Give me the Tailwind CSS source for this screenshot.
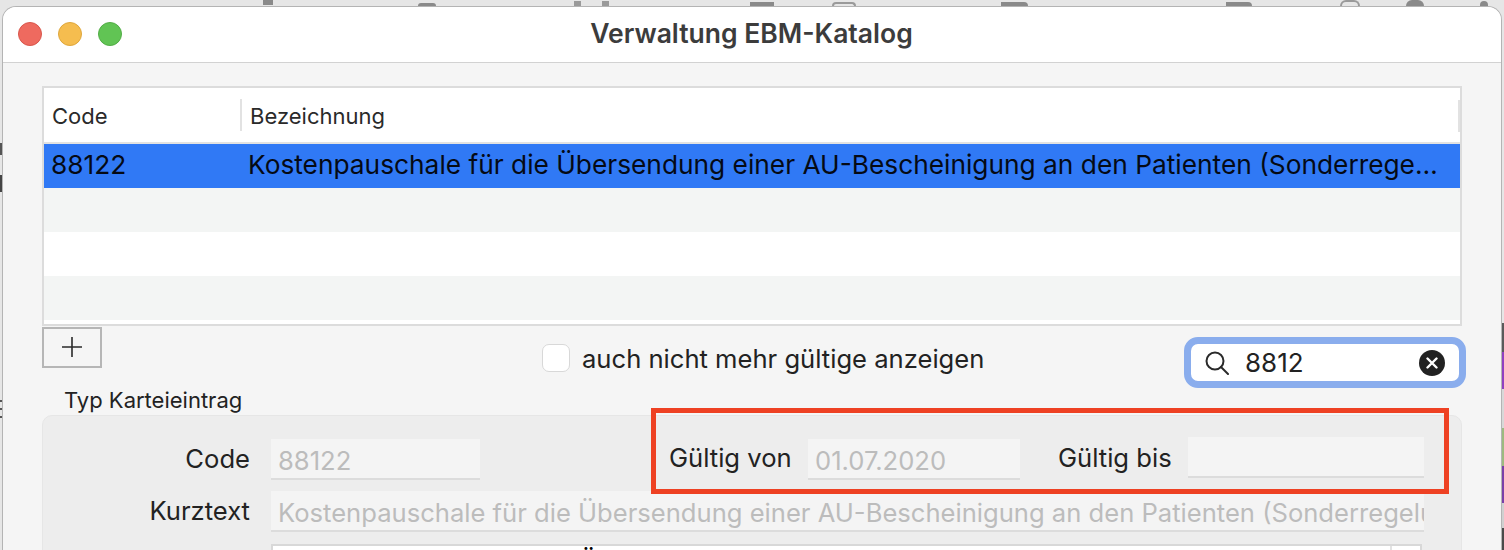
<!DOCTYPE html>
<html lang="de">
<head>
<meta charset="UTF-8">
<title>Verwaltung EBM-Katalog</title>
<script src="https://cdn.jsdelivr.net/npm/@tailwindcss/browser@4"></script>
</head>
<body class="relative bg-[#e6e6e6] font-['Inter','Liberation_Sans',sans-serif] overflow-hidden h-[550px]">
<!-- desktop behind the window -->
<div class="absolute left-[263px] top-0 w-[10px] h-[5px] bg-[#8a8a8a]"></div>
<div class="absolute left-[418px] top-[3px] w-[18px] h-[3px] bg-[#8a8a8a] rounded-t"></div>
<div class="absolute left-[574px] top-[1px] w-[7px] h-[5px] bg-[#9a9a9a]"></div>
<div class="absolute left-[602px] top-[1px] w-[7px] h-[5px] bg-[#9a9a9a]"></div>
<div class="absolute left-[750px] top-[2px] w-[24px] h-[4px] bg-[#8a8a8a]"></div>
<div class="absolute left-[832px] top-[2px] w-[24px] h-[4px] border-2 border-b-0 border-[#9a9a9a] rounded-t"></div>
<div class="absolute left-[1001px] top-[2px] w-[27px] h-[4px] bg-[#8a8a8a] rounded-tr"></div>
<div class="absolute left-[1226px] top-[2px] w-[26px] h-[4px] bg-[#8a8a8a] rounded-tr"></div>
<div class="absolute left-[1340px] top-0 w-[20px] h-[6px] border-2 border-b-0 border-[#9a9a9a] rounded-t-full"></div>
<div class="absolute left-[1406px] top-0 w-[18px] h-[6px] bg-[#8a8a8a] rounded-t-full"></div>
<div class="absolute left-[1480px] top-[1px] w-[8px] h-[5px] bg-[#8a8a8a] rounded-t-full"></div>
<div class="absolute left-0 top-[143px] w-[2px] h-[12px] bg-[#555]"></div>
<div class="absolute left-0 top-[175px] w-[2px] h-[17px] bg-[#444]"></div>
<div class="absolute left-0 top-[400px] w-[2px] h-[2px] bg-[#555]"></div>
<div class="absolute left-0 top-[408px] w-[2px] h-[2px] bg-[#555]"></div>
<div class="absolute left-0 top-[416px] w-[2px] h-[2px] bg-[#555]"></div>
<div class="absolute right-0 top-[323px] w-[2px] h-[227px] flex flex-col">
    <div class="h-[29px] bg-[#5a5a5a]"></div>
    <div class="h-[37px] bg-[#9040c0]"></div>
    <div class="h-[39px] bg-[#d8d8d8]"></div>
    <div class="h-[38px] bg-[#9dba80]"></div>
    <div class="h-[37px] bg-[#7a3fa8]"></div>
    <div class="h-[25px] bg-[#d0d0d0]"></div>
    <div class="h-[22px] bg-[#4a4a4a]"></div>
</div>

<div class="relative ml-[2px] pt-[6px] w-[1500px]">
<div class="h-[544px] rounded-t-[14px] bg-[#f5f5f5] border-t border-x border-[#b4b4b4] overflow-hidden">
    <!-- title bar -->
    <div class="relative h-[56px] bg-white border-b border-[#d2d2d2] flex items-center justify-center">
        <div class="absolute left-[15px] top-[15px] flex gap-[16px]">
            <span class="w-[24px] h-[24px] rounded-full bg-[#ee6a5f] border border-[#d9564c]"></span>
            <span class="w-[24px] h-[24px] rounded-full bg-[#f5bd4f] border border-[#dfa73c]"></span>
            <span class="w-[24px] h-[24px] rounded-full bg-[#61c454] border border-[#52ad46]"></span>
        </div>
        <h1 class="text-[26.5px] leading-[30px] -mt-[4px] -ml-[1px] font-semibold text-[#3c3c3c]">Verwaltung EBM-Katalog</h1>
    </div>

    <div class="pl-[39px] pr-[39px] pt-[23px]">
        <!-- table -->
        <div class="h-[240px] border-2 border-[#dcdcdc] bg-white">
            <div class="relative h-[56px] border-b-2 border-[#e2e2e2] flex items-center text-[22px] text-[#2a2a2a]">
                <div class="w-[196px] pl-[8px] pt-[2px]">Code</div>
                <div class="w-[2px] h-[32px] bg-[#e2e2e2]"></div>
                <div class="pl-[8px] pt-[2px]">Bezeichnung</div>
                <div class="absolute right-0 top-[12px] w-[2px] h-[32px] bg-[#e2e2e2]"></div>
            </div>
            <div class="h-[44px] bg-[#3079f5] flex items-center text-[26.3px] leading-[40px] pb-[2px] text-[#050a14]">
                <div class="w-[204px] pl-[7px]">88122</div>
                <div class="w-[1192px] truncate">Kostenpauschale für die Übersendung einer AU-Bescheinigung an den Patienten (Sonderregelung)</div>
            </div>
            <div class="h-[44px] bg-[#f3f5f4]"></div>
            <div class="h-[44px] bg-white"></div>
            <div class="h-[44px] bg-[#f3f5f4]"></div>
        </div>

        <!-- toolbar row -->
        <div class="relative h-[88px]">
            <button class="mt-[1px] w-[60px] h-[41px] border-2 border-[#b6b6b6] flex items-center justify-center">
                <svg width="22" height="22" viewBox="0 0 22 22" class="text-[#2a2a2a] -mt-[2px]"><path d="M11 1v20M1 11h20" stroke="currentColor" stroke-width="1.6"/></svg>
            </button>
            <div class="absolute left-[500px] top-[16px] flex items-center gap-[12px]">
                <span class="w-[28px] h-[28px] rounded-[7px] bg-white border border-[#d8d8d8]"></span>
                <span class="text-[25.6px] leading-[28px] mt-[2px] text-[#222]">auch nicht mehr gültige anzeigen</span>
            </div>
            <div class="absolute left-[1142px] top-[10px] w-[282px] h-[51px] rounded-[14px] border-[7px] border-[#8aaded] bg-white flex items-center pl-[14px] pr-[14px]">
                <svg width="24" height="24" viewBox="0 0 24 24" fill="none" stroke="#2a2a2a" stroke-width="2"><circle cx="10" cy="10" r="8.5"/><path d="M16 16l7 7" stroke-linecap="round"/></svg>
                <span class="ml-[16px] text-[26px] text-[#222]">8812</span>
                <span class="ml-auto w-[26px] h-[26px] rounded-full bg-[#222] flex items-center justify-center">
                    <svg width="12" height="12" viewBox="0 0 12 12"><path d="M1.5 1.5l9 9M10.5 1.5l-9 9" stroke="#fff" stroke-width="2.4" stroke-linecap="round"/></svg>
                </span>
            </div>
            <div class="absolute left-[22px] top-[60px] text-[22px] leading-[26px] text-[#222] whitespace-nowrap">Typ Karteieintrag</div>
        </div>

        <!-- Typ Karteieintrag panel -->
        <div class="relative h-[200px] rounded-t-[10px] bg-[#ededed] border border-[#e6e6e6] pt-[23px]">
            <div class="flex h-[41px] items-center">
                <div class="w-[207px] text-right text-[25.6px] text-[#222]">Code</div>
                <div class="ml-[21px] w-[209px] h-[41px] bg-[#f4f4f4] border-b-2 border-[#dcdcdc] pl-[7px] text-[25.6px] leading-[44px] text-[#bcbcbc]">88122</div>
                <div class="ml-[189px] w-[122px] -mt-[3px] text-[25.6px] leading-[30px] text-[#222] whitespace-nowrap">Gültig von</div>
                <div class="ml-[17px] w-[212px] h-[41px] bg-[#f4f4f4] border-b-2 border-[#dcdcdc] pl-[7px] text-[25.6px] leading-[44px] text-[#bcbcbc]">01.07.2020</div>
                <div class="ml-[38px] w-[113px] -mt-[3px] text-[25.6px] leading-[30px] text-[#222] whitespace-nowrap">Gültig bis</div>
                <div class="ml-[17px] w-[236px] h-[41px] -mt-[4px] bg-[#f4f4f4] border-b-2 border-[#dcdcdc]"></div>
            </div>
            <div class="flex h-[41px] items-center mt-[11px]">
                <div class="w-[207px] text-right text-[25.6px] text-[#222]">Kurztext</div>
                <div class="ml-[21px] w-[1153px] h-[41px] bg-[#f4f4f4] border-b-2 border-[#dcdcdc] pl-[7px] text-[25.6px] leading-[44px] text-[#bcbcbc] overflow-hidden whitespace-nowrap">Kostenpauschale für die Übersendung einer AU-Bescheinigung an den Patienten (Sonderregelung)</div>
            </div>
            <div class="relative ml-[228px] mt-[12px] w-[1151px] h-[60px] bg-white border-2 border-[#d8d8d8] pl-[6px] text-[25.6px] leading-[32px] text-black whitespace-nowrap overflow-hidden">Kostenpauschale für die Übersendung einer AU-Bescheinigung
                <div class="absolute right-0 top-0 w-[30px] h-full bg-white border-l-2 border-[#e2e2e2]"></div>
            </div>
        </div>
    </div>
</div>
</div>
<!-- highlight box drawn over the screenshot -->
<div class="absolute left-[651px] top-[408px] w-[798px] h-[86px] border-[5px] border-[#ee4123]"></div>
</body>
</html>
